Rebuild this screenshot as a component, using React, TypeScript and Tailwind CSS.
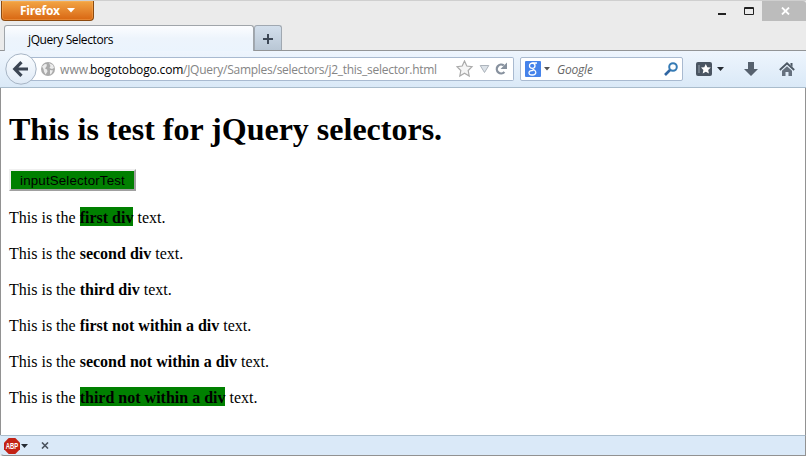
const UI = "font-['Open_Sans','Noto_Sans',sans-serif]";

function TitleBar() {
  return (
    <div className="flex h-[25px] items-start justify-between border-t border-[#cfcfcf]">
      <div className="ml-px flex h-5 w-[93px] items-center rounded-b-[4px] border border-t-0 border-[#8b4a10] bg-gradient-to-b from-[#f2a544] to-[#d8660f] pl-[18px] text-white shadow-[inset_0_0_0_1px_rgba(255,190,110,0.35)]">
        <span className="w-[41px] whitespace-nowrap text-[12px] leading-none font-bold tracking-[-0.3px]">Firefox</span>
        <svg className="ml-[6px]" width="8" height="5" viewBox="0 0 8 5">
          <path d="M0 0h8L4 4.5z" fill="#fff" />
        </svg>
      </div>
      <div className="flex">
        <svg width="44" height="20" viewBox="0 0 44 20">
          <path d="M0 12h8v2H0z" fill="#222" />
          <path d="M26.5 6.5h9v7h-9zM26 7.5h10" fill="none" stroke="#222" />
        </svg>
        <div className="flex h-5 w-[44px] items-center justify-center rounded-tr-[3px] bg-[#bcbcbc]">
          <svg className="mr-[-2px]" width="9" height="8" viewBox="0 0 9 8">
            <path d="M1 .5l7 7M8 .5l-7 7" stroke="#fff" strokeWidth="1.8" />
          </svg>
        </div>
      </div>
    </div>
  );
}

function Tabs() {
  return (
    <div className="flex h-[25px] items-start pl-1">
      <div className="z-10 flex h-[26px] w-[250px] items-center rounded-t-[3px] border border-b-0 border-[#a0a5aa] bg-gradient-to-b from-[#fcfdff] via-[#edf4fc] to-[#ebf4fd] pt-[2px] pl-[23px] text-[12px] text-black">
        <span className="whitespace-nowrap tracking-[-0.4px]">jQuery Selectors</span>
      </div>
      <div className="flex h-[25px] w-7 items-center justify-center rounded-t-[3px] border border-b-0 border-[#a0a8b1] bg-gradient-to-b from-[#d3dfec] to-[#b9c7d5]">
        <svg className="mt-[2px]" width="10" height="10" viewBox="0 0 10 10">
          <path d="M4 0h2v4h4v2H6v4H4V6H0V4h4z" fill="#3d4856" />
        </svg>
      </div>
    </div>
  );
}

function Toolbar() {
  return (
    <div className="flex h-[38px] items-center border-t border-b border-t-[#929496] border-b-[#a9bccc] bg-gradient-to-b from-[#eef5fd] to-[#dae9f7]">
      <svg className="z-10 ml-[5px] shrink-0" width="32" height="32" viewBox="0 0 32 32">
        <defs>
          <linearGradient id="back" x1="0" y1="0" x2="0" y2="1">
            <stop offset="0" stopColor="#fbfdff" />
            <stop offset="1" stopColor="#dfeaf6" />
          </linearGradient>
        </defs>
        <circle cx="16" cy="16" r="15.2" fill="url(#back)" stroke="#a6b4c4" />
        <path d="M16.5 9.2L9.8 16l6.7 6.8M10.5 16H23" fill="none" stroke="#3b4553" strokeWidth="3.2" />
      </svg>
      <div className="-ml-[8px] flex h-6 w-[485px] shrink-0 items-center rounded-r-[2px] border border-l-0 border-[#a9bad0] bg-white pl-3">
        <svg width="14" height="14" viewBox="0 0 14 14">
          <circle cx="7" cy="7" r="7" fill="#aaa" />
          <path d="M1 4.5L4 2l2 .5-.5 2L4 6.5l2 1 .5 2-2 3L3 9.5 2.5 7zM8 1l4 2 1 3-2 1-2.5-1 1-2zM9 8l3 .5-1.5 3-1.5 1z" fill="#ececec" />
        </svg>
        <div className="ml-[5px] w-[396px] pt-[2px] text-[12px] whitespace-nowrap text-[#858585]">
          <span className="inline-block w-[30px] tracking-[0.1px]">www.</span>
          <span className="inline-block w-[93px] tracking-[-0.15px] text-black">bogotobogo.com</span>
          <span className="tracking-[-0.27px]">/JQuery/Samples/selectors/j2_this_selector.html</span>
        </div>
        <svg width="55" height="18" viewBox="0 0 55 18">
          <path d="M8.5 1l2.3 5 5.2.7-3.8 3.8 1 5.5-4.7-2.7L3.8 16l1-5.5L1 6.7 6.2 6z" fill="#f5f5f5" stroke="#aaa" strokeWidth="1.2" />
          <path d="M24.2 5.5h8.6l-4.3 7z" fill="#dce2e8" stroke="#adb4bc" />
          <path d="M47.8 5.4A4.4 4.4 0 1 0 48.4 12" fill="none" stroke="#87919e" strokeWidth="2.3" />
          <path d="M51 2.5v6.5h-6.5z" fill="#87919e" />
        </svg>
      </div>
      <div className="ml-[6px] flex h-6 w-[163px] shrink-0 items-center rounded-[2px] border border-[#a9bad0] bg-white pl-1">
        <div className="flex h-4 w-4 items-center justify-center rounded-[1px] bg-[#4683ea]">
          <svg width="12" height="14" viewBox="0 0 12 14">
            <path d="M10 1H6C3.7 1 2.5 2.2 2.5 3.8S3.7 6.3 5.3 6.3 8 5.3 8 3.8 7.1 1.2 5.5 1M6 6.3c-1.2 1.2 2.8 1.7 2.8 4S7.5 13 5.2 13 2 12.2 2 10.7s1.5-2.2 4.5-2.3" fill="none" stroke="#fff" strokeWidth="1.3" />
          </svg>
        </div>
        <svg className="ml-[3px]" width="6" height="4" viewBox="0 0 6 4">
          <path d="M0 0h6L3 3.5z" fill="#555" />
        </svg>
        <span className="ml-[7px] grow pt-[2px] text-[12px] tracking-[-0.2px] text-[#666] italic">Google</span>
        <svg className="mr-1" width="14" height="14" viewBox="0 0 14 14">
          <circle cx="9" cy="5" r="3.8" fill="none" stroke="#367bb5" strokeWidth="2" />
          <path d="M6 8l-5 5" stroke="#3066a3" strokeWidth="2.6" />
        </svg>
      </div>
      <svg className="ml-[13px]" width="16" height="14" viewBox="0 0 16 14">
        <rect width="16" height="14" rx="2" fill="#4a5562" />
        <path d="M2 3h2v8H2z" fill="#707b87" />
        <path d="M9.8 2l1.5 3.2 3.5.4-2.6 2.4.7 3.6-3.1-1.8-3.1 1.8.7-3.6-2.4-2.4L8.3 5.2z" fill="#fff" />
      </svg>
      <svg className="ml-[5px]" width="7" height="4" viewBox="0 0 7 4">
        <path d="M0 0h7L3.5 4z" fill="#252b33" />
      </svg>
      <svg className="ml-5" width="14" height="14" viewBox="0 0 14 14">
        <path d="M4 0h6v7h4l-7 7-7-7h4z" fill="#56616e" />
      </svg>
      <svg className="ml-[21px]" width="16" height="14" viewBox="0 0 16 14">
        <path d="M.8 8L8 1.3 15.2 8" fill="none" stroke="#4b5662" strokeWidth="1.8" />
        <path d="M3 8.8l5-4.5 5 4.5V14H9.5v-4h-3v4H3z" fill="#66717e" />
        <path d="M11.5 1h2v4l-2-2z" fill="#4b5662" />
      </svg>
    </div>
  );
}

const lines = [
  { text: "first div", marked: true },
  { text: "second div", marked: false },
  { text: "third div", marked: false },
  { text: "first not within a div", marked: false },
  { text: "second not within a div", marked: false },
  { text: "third not within a div", marked: true },
];

function Page() {
  return (
    <main className="h-[347px] border-x border-[#929292] bg-white pt-[22px] pl-2 font-['Liberation_Serif',serif] text-black">
      <h1 className="pt-px text-[32px] leading-[37px] font-bold">This is test for jQuery selectors.</h1>
      <button className="mt-[21px] block h-[22px] w-[127px] border-2 border-t-[#f0f0f0] border-r-[#a0a0a0] border-b-[#a0a0a0] border-l-[#f0f0f0] bg-[#008000] pt-px font-['Liberation_Sans',sans-serif] text-[13.33px] leading-[17px] whitespace-nowrap">
        <span className="tracking-[0.15px]">inputSelectorTest</span>
      </button>
      <div className="mt-[18px] flex flex-col gap-[18px]">
        {lines.map((line) => (
          <p key={line.text} className="text-[16px] leading-[18px]">
            This is the <b className={line.marked ? "bg-[#008000] pt-[2px]" : ""}>{line.text}</b> text.
          </p>
        ))}
      </div>
    </main>
  );
}

function AddonBar() {
  return (
    <div className="flex h-[21px] items-center rounded-bl-[4px] border border-t-[#a9bccc] border-r-[#929292] border-b-[#929292] border-l-[#d9e8f6] bg-[#dae9f8] pl-[3px]">
      <svg className="overflow-visible" width="16" height="16" viewBox="0 0 16 16">
        <path d="M4.7 0h6.6L16 4.7v6.6L11.3 16H4.7L0 11.3V4.7z" fill="#c32315" />
        <text x="1.8" y="11" textLength="12.4" lengthAdjust="spacingAndGlyphs" fill="#fff" className="font-['Liberation_Sans',sans-serif] text-[8.5px] font-bold">ABP</text>
      </svg>
      <svg className="ml-px" width="7" height="4" viewBox="0 0 7 4">
        <path d="M0 0h7L3.5 4z" fill="#252b33" />
      </svg>
      <svg className="ml-[13px]" width="8" height="7" viewBox="0 0 8 7">
        <path d="M1 .5l6 6M7 .5l-6 6" stroke="#4a535e" strokeWidth="1.6" />
      </svg>
    </div>
  );
}

export default function App() {
  return (
    <div className={`h-[456px] w-[806px] overflow-hidden bg-[#ebebeb] ${UI}`}>
      <TitleBar />
      <Tabs />
      <Toolbar />
      <Page />
      <AddonBar />
    </div>
  );
}
